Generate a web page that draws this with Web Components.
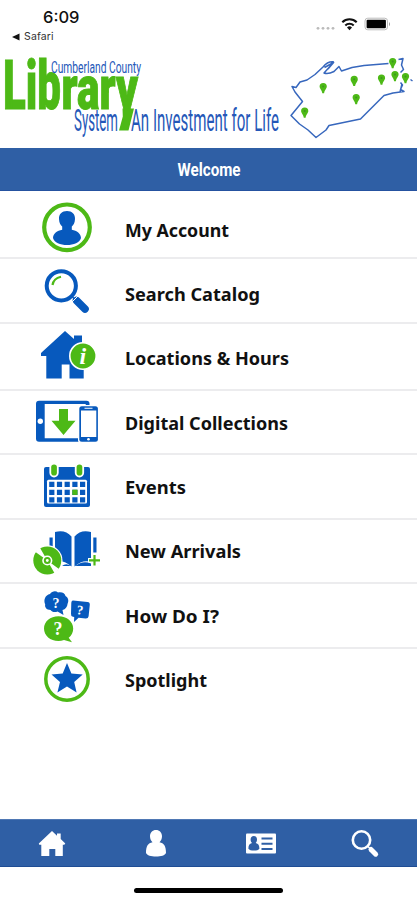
<!DOCTYPE html>
<html lang="en">
<head>
<meta charset="utf-8">
<meta name="viewport" content="width=device-width, initial-scale=1">
<title>Cumberland County Library System</title>
<style>
    body {
        margin: 0;
        background: #fff;
        font-family: "Noto Sans", "DejaVu Sans", sans-serif;
        --blue: #0759bd;
        --green: #4db916;
        --bar: #2f5fa5;
        --line: #ececee;
    }
</style>
</head>
<body>
<library-app></library-app>

<script>
// Small helper: every element gets an open root cloned from a template
function define(name, html) {
    const template = document.createElement('template');
    template.innerHTML = html;

    customElements.define(name, class extends HTMLElement {
        constructor() {
            super();
            this.attachShadow({ mode: 'open' });
            this.shadowRoot.appendChild(template.content.cloneNode(true));
        }
    });
}

define('status-bar', `
    <style>
        :host {
            display: flex;
            justify-content: space-between;
            height: 50px;
            box-sizing: border-box;
            padding: 8px 26px 0 12px;
            font-family: Inter, "Liberation Sans", sans-serif;
            color: #111;
        }
        .time {
            padding-left: 31px;
            font-size: 16.5px;
            line-height: 19px;
            font-weight: 500;
        }
        .back {
            display: flex;
            align-items: center;
            gap: 4px;
            font-size: 10.5px;
            line-height: 19px;
            letter-spacing: 0.15px;
            color: #333;
        }
    </style>
    <div>
        <div class="time">6:09</div>
        <div class="back">
            <svg width="8" height="8" viewBox="0 0 8 8"><path d="M0 4 7.5 .6v6.8z" fill="#111"/></svg>
            <span>Safari</span>
        </div>
    </div>
    <svg width="76" height="24" viewBox="315 8 76 24">
        <g fill="#bbb">
            <circle cx="318" cy="28.3" r="1.4"/><circle cx="323" cy="28.3" r="1.4"/>
            <circle cx="328" cy="28.3" r="1.4"/><circle cx="333" cy="28.3" r="1.4"/>
        </g>
        <g fill="none" stroke="#111" stroke-width="2.1">
            <path d="M342.3 22.3a10.2 10.2 0 0 1 14.4 0"/>
            <path d="M345.3 25.5a6 6 0 0 1 8.4 0"/>
        </g>
        <path d="M349.5 30.2l-2.5-2.8a3.6 3.6 0 0 1 5 0z" fill="#111"/>
        <rect x="365" y="18.2" width="22.5" height="11.6" rx="2.8" fill="#fff" stroke="#bbb"/>
        <rect x="366.6" y="19.8" width="19.3" height="8.4" rx="1" fill="#000"/>
        <path d="M389 22v4.2q2-2.1 0-4.2z" fill="#999"/>
    </svg>
`);

define('library-banner', `
    <style>
        :host {
            display: block;
            height: 98px;
        }
        svg {
            display: block;
            overflow: visible;
        }
        text {
            font-family: Roboto, "Liberation Sans", sans-serif;
        }
        .name {
            font-weight: 900;
            fill: var(--green);
            stroke: var(--green);
            stroke-width: 1px;
        }
        .small {
            fill: #2457b8;
        }
    </style>
    <svg width="417" height="98" viewBox="0 50 417 98">
        <!-- the y loses its hook and gets a straight tail instead -->
        <clipPath id="tail"><path d="M0 50h150v60H0z"/></clipPath>
        <text class="name" y="108.700" clip-path="url(#tail)"><tspan x="3" font-size="68" textLength="58" lengthAdjust="spacingAndGlyphs">Lib</tspan><tspan x="61.500" font-size="61" textLength="76.500" lengthAdjust="spacingAndGlyphs">rary</tspan></text>
        <path d="M122.500 108.500h11.500l-5.500 22h-9.500l3.800-14z" fill="#4db916"/>
        <g class="small">
            <text x="51" y="72.500" font-size="17" textLength="90" lengthAdjust="spacingAndGlyphs">Cumberland County</text>
            <text x="74" y="130.500" font-size="32" textLength="44" lengthAdjust="spacingAndGlyphs">System</text>
            <text x="131" y="130.500" font-size="32" textLength="148" lengthAdjust="spacingAndGlyphs">An Investment for Life</text>
        </g>
        <path fill="none" stroke="#3767bd" stroke-width="1.500" stroke-linejoin="round"
            d="M388.500 63.500 364 65.500 352 67.500 341.500 71 339 66.500 334 71.500Q328 74.500 324 73L333.500 62.500 324.500 67.500M334 62Q328 61 323 67L315 74.500 307 80 300 82 296 87.500 292 86.500 295 92 302.500 101.500 298 107 291 115.500 299.500 124 308 130 316 137.500 326 130 329 125.500 360.500 119 384 95.500 393 93 404 91.500 400.500 89.500 402.500 85 400.500 82.500M398.500 59.500 403 58.500 401.500 65 403.500 69.500 400.500 72.500M334 62l-6 7M410.500 79.500l2 1.500M402 84l-2 8"/>
        <g fill="#4db916">
            <path id="p" d="M392.700 58a3.600 3.600 0 0 1 3.600 3.600c0 2-1.900 2.900-2.700 6.600h-1.800c-.8-3.700-2.700-4.600-2.700-6.600a3.600 3.600 0 0 1 3.600-3.600z"/>
            <use href="#p" x="2.300" y="13"/><use href="#p" x="12.800" y="15"/>
            <use href="#p" x="-11.200" y="16.500"/><use href="#p" x="-38.500" y="17.800"/>
            <use href="#p" x="-69.500" y="25"/><use href="#p" x="-36.500" y="36"/>
            <use href="#p" x="-88" y="49.500"/>
        </g>
        <g fill="#3c9620">
            <circle cx="392.700" cy="61.500" r="1"/><circle cx="395" cy="74.500" r="1"/><circle cx="405.500" cy="76.500" r="1"/>
            <circle cx="381.500" cy="78" r="1"/><circle cx="354.200" cy="79.300" r="1"/><circle cx="323.200" cy="86.500" r="1"/>
            <circle cx="356.200" cy="97.500" r="1"/><circle cx="304.700" cy="111" r="1"/>
        </g>
    </svg>
`);

define('title-bar', `
    <style>
        :host {
            display: flex;
            justify-content: center;
            align-items: center;
            height: 43px;
            box-sizing: border-box;
            background: var(--bar);
            border-bottom: 1px solid #2552a0;
        }
        text {
            font-family: Roboto, "Liberation Sans", sans-serif;
            font-weight: 700;
            font-size: 17.5px;
            fill: #fff;
        }
    </style>
    <svg width="80" height="26" viewBox="0 0 80 26">
        <text x="8.500" y="19.5" textLength="63" lengthAdjust="spacingAndGlyphs">Welcome</text>
    </svg>
`);

// Drawings share one canvas: 110 wide, 60 high, centred on the row's label
const icons = {
    account: `<svg viewBox="0 200 110 60">
        <circle cx="67" cy="227.300" r="22.800" fill="none" stroke="#4db916" stroke-width="4.200"/>
        <path fill="#0759bd" d="M67 211c5 0 8.300 3 8 8-.2 4-1.500 6-3.200 7.500v3.300c5 .8 9.200 4 9.200 8.200-1 4.500-7.500 7-14 7s-13-2.500-14-7c0-4.200 4.200-7.400 9.200-8.200v-3.300C60.500 225 59.200 223 59 219c-.3-5 3-8 8-8z"/>
    </svg>`,
    search: `<svg viewBox="0 264 110 60">
        <circle cx="61.300" cy="285.800" r="14.600" fill="none" stroke="#0759bd" stroke-width="4"/>
        <path d="M52.500 285q1-6.500 8.500-8.200" fill="none" stroke="#4db916" stroke-width="2.200"/>
        <path d="M72.500 297l3.500 3.500" stroke="#0759bd" stroke-width="1.500"/>
        <path d="M76.500 300.500l8.500 8.500" stroke="#0759bd" stroke-width="7.600" stroke-linecap="round"/>
        <path d="M72 302l6-6" stroke="#fff" stroke-width="1"/>
    </svg>`,
    locations: `<svg viewBox="0 328 110 60">
        <path fill="#0759bd" d="M65 331l9 8v-3.500h8V347l7 6.500v2.500h-5.300v22.500H69.500V364.500h-7.800v14H46.300V356H41v-3z"/>
        <circle cx="83" cy="356" r="13.200" fill="#4db916" stroke="#fff" stroke-width="1.600"/>
        <text x="82.800" y="364" text-anchor="middle" font-family="Liberation Serif, serif" font-size="24" font-weight="700" font-style="italic" fill="#fff">i</text>
    </svg>`,
    digital: `<svg viewBox="0 393 110 60">
        <rect x="36" y="400.700" width="53.500" height="41" rx="3" fill="#0759bd"/>
        <path d="M44.700 404h41v34.300h-41z" fill="#fff"/>
        <circle cx="40.300" cy="421.300" r="2.700" fill="#fff"/>
        <path d="M59 409h9v11.800h7.500L63.500 435l-12-14.200H59z" fill="#4db916"/>
        <rect x="78" y="405" width="21" height="38" rx="3" fill="#fff"/>
        <rect x="79.300" y="406.300" width="18.600" height="35.400" rx="2.500" fill="#0759bd"/>
        <path d="M81 410.500h15.300V437H81zM84.500 407.800h8v1h-8z" fill="#fff"/>
        <circle cx="88.500" cy="439.200" r="1.300" fill="#fff"/>
    </svg>`,
    events: `<svg viewBox="0 457 110 60">
        <rect x="44" y="467" width="46" height="40" rx="2" fill="#0759bd"/>
        <rect x="47" y="479.800" width="40" height="23.700" rx="1.500" fill="#fff"/>
        <g stroke="#0759bd" stroke-width="5.200" stroke-dasharray="5.200 2.500">
            <path d="M49.200 484.300h36M49.200 492.300h36M49.200 499.900h36"/>
        </g>
        <path d="M72.300 489.700h5.200v5.200h-5.200z" fill="#4db916"/>
        <g fill="#4db916" stroke="#fff" stroke-width="1.800">
            <rect x="50.300" y="463.500" width="7.500" height="13" rx="3.700"/>
            <rect x="75.700" y="463.500" width="7.500" height="13" rx="3.700"/>
        </g>
    </svg>`,
    arrivals: `<svg viewBox="0 521 110 60">
        <g fill="#0759bd">
            <path d="M55 532q10-3 16.500 4.500v30Q63 559 55 562zM91 532q-10-3-16.500 4.500v30Q83 559 91 562z"/>
            <path d="M49.500 537.500h3.200v22h-3.200zM93.300 537.500h3.200v15h-3.200z"/>
            <path d="M62 566q4-3.500 9 0zM75 566q8-6 16-2.500v2.500z"/>
        </g>
        <circle cx="47.300" cy="560.500" r="15.200" fill="#fff"/>
        <circle cx="47.300" cy="560.500" r="14" fill="#4db916"/>
        <path d="M47.300 560.500L35.500 552 39.500 547zM47.300 560.500L59 569 55 574z" fill="#fff"/>
        <circle cx="47.300" cy="560.500" r="4.300" fill="#4db916" stroke="#fff" stroke-width="1.600"/>
        <circle cx="47.300" cy="560.500" r="1.400" fill="#fff"/>
        <path d="M94.500 554v12.500M88 560.300h13" stroke="#fff" stroke-width="4.500"/>
        <path d="M94.500 555v10.600M89 560.300h11" stroke="#4db916" stroke-width="2.200"/>
    </svg>`,
    help: `<svg viewBox="0 586 110 60">
        <path fill="#0759bd" d="M50 594c2-3 6-3.500 8-1.500 4-1 7 1 7.500 3.500 3 1.500 3.500 5 2 8-.5 4-3 5.500-5 6l1 5-6-3.500c-3 1.500-6 0-7-1.500-4 0-6-3-5.300-5.500-2-4.500 0-9.500 4.800-10.500z"/>
        <path fill="#0759bd" d="M73 600.500l14.500 1.500q2.500.3 2.300 2.800l-1.200 11.500q-.4 2.400-3 2.200l-7-.8-4.600 4.300.2-5-1.200-.3q-2.300-.5-2-3l.3-11q.3-2.300 1.700-2.200z"/>
        <path fill="#4db916" d="M58.500 616.200c8.500 0 14.700 5.400 14.700 12.300 0 3.800-1.700 7-4.500 9.300l3.300 4.400-8-2.200c-1.800.7-3.600 1-5.500 1-8.300 0-14.500-5.500-14.500-12.500s6.200-12.300 14.500-12.300z"/>
        <g fill="#fff" font-family="Liberation Serif, serif" font-weight="700" text-anchor="middle">
            <text x="56" y="608" font-size="14">?</text>
            <text x="80" y="614.500" font-size="13" transform="rotate(7 80 610)">?</text>
            <text x="58" y="635" font-size="18">?</text>
        </g>
    </svg>`,
    spotlight: `<svg viewBox="0 650 110 60">
        <circle cx="67" cy="679" r="21.200" fill="none" stroke="#4db916" stroke-width="3.500"/>
        <path fill="#0759bd" d="M67 663l4.400 10.600 11.300.9-8.500 7.500 2.400 10.500L67 686.500l-9.600 6L60 682l-8.500-7.500 11.200-.9z"/>
    </svg>`
};

class MenuRow extends HTMLElement {
    connectedCallback() {
        const root = this.attachShadow({ mode: 'open' });
        root.innerHTML = `
            <style>
                :host {
                    display: grid;
                    grid-template-columns: 110px 1fr;
                    align-items: center;
                    column-gap: 15px;
                    box-sizing: border-box;
                    height: 64.4px;
                    padding-top: 1px;
                    border-bottom: 2px solid var(--line);
                }
                :host(:first-child) { height: 68px; padding-top: 10.5px; }
                :host(:nth-child(2)) { height: 65px; padding-top: 7px; }
                :host(:nth-child(3)) { height: 67px; padding-top: 3px; }
                :host(:last-child) { border-color: transparent; padding: 0; }
                svg { display: block; }
                .icon svg { width: 110px; height: 60px; margin: -2px 0; }
                .label {
                    font-weight: 700;
                    font-size: 17.5px;
                    fill: #111;
                }
            </style>
            <div class="icon">${icons[this.getAttribute('icon')]}</div>
            <svg width="200" height="26">
                <text class="label" x="0" y="19.6" textLength="${this.getAttribute('measure')}" lengthAdjust="spacingAndGlyphs">${this.innerHTML}</text>
            </svg>
        `;
    }
}

customElements.define('menu-row', MenuRow);

define('tab-bar', `
    <style>
        :host {
            display: grid;
            grid-template-columns: repeat(4, 1fr);
            align-items: center;
            justify-items: center;
            height: 48px;
            box-sizing: border-box;
            background: var(--bar);
            border-top: 1px solid #4f78b4;
            border-bottom: 1px solid #1f4d94;
        }
        svg {
            width: 34px;
            height: 30px;
        }
    </style>
    <svg viewBox="35.500 829 34 30"><path fill="#fff" d="M52.500 832l5 4.700V834.500h3.700v5.500l4.600 4.500-1 1.200h-1.500V857h-7.500v-7h-6v7h-8v-11.300h-2l-.5-1.200z"/></svg>
    <svg viewBox="139 829 34 30"><path fill="#fff" d="M156 831c3.500 0 6 2.500 6 6.300 0 2.500-1 4.600-2.500 6 4.500.7 6.500 4 6.500 10.700-1 2.500-5 3.500-10 3.500s-9-1-10-3.500c0-6.700 2-10 6.500-10.700-1.500-1.400-2.500-3.500-2.500-6 0-3.800 2.500-6.300 6-6.300z"/></svg>
    <svg viewBox="243.500 829 34 30">
        <rect x="245.500" y="834.500" width="30" height="20" rx="1" fill="#fff"/>
        <path fill="#2f5fa5" d="M253.300 837c2 0 3.200 1.300 3.200 3.500 0 1.600-.5 2.600-1.300 3.500 2.700.6 3.700 2.500 3.700 5.700-1.500 2.500-9.500 2.500-11 0 0-3.200 1-5.100 3.600-5.700-.9-.9-1.400-1.900-1.400-3.500 0-2.200 1.200-3.500 3.200-3.500z"/>
        <path d="M261 839.500h11M261 844.700h11M261 850h11" stroke="#2f5fa5" stroke-width="1.900"/>
    </svg>
    <svg viewBox="348 829 34 30" fill="none" stroke="#fff">
        <circle cx="361.500" cy="841" r="8.700" stroke-width="2.600"/>
        <path d="M368 847.500l2.500 2.500" stroke-width="1.500"/>
        <path d="M371 850.500l4.700 4.700" stroke-width="5" stroke-linecap="round"/>
    </svg>
`);

define('library-app', `
    <style>
        :host {
            display: flex;
            flex-direction: column;
            height: 900px;
            overflow: hidden;
        }
        nav {
            flex: 1;
        }
        .home {
            display: flex;
            justify-content: center;
            height: 33px;
            box-sizing: border-box;
            padding-top: 21px;
        }
        .home::before {
            content: "";
            width: 149px;
            height: 4.5px;
            border-radius: 3px;
            background: #000;
        }
    </style>
    <status-bar></status-bar>
    <library-banner></library-banner>
    <title-bar></title-bar>
    <nav>
        <menu-row icon="account" measure="104">My Account</menu-row>
        <menu-row icon="search" measure="135">Search Catalog</menu-row>
        <menu-row icon="locations" measure="164">Locations &amp; Hours</menu-row>
        <menu-row icon="digital" measure="163">Digital Collections</menu-row>
        <menu-row icon="events" measure="61">Events</menu-row>
        <menu-row icon="arrivals" measure="116">New Arrivals</menu-row>
        <menu-row icon="help" measure="94">How Do I?</menu-row>
        <menu-row icon="spotlight" measure="82">Spotlight</menu-row>
    </nav>
    <tab-bar></tab-bar>
    <div class="home"></div>
`);
</script>
</body>
</html>
